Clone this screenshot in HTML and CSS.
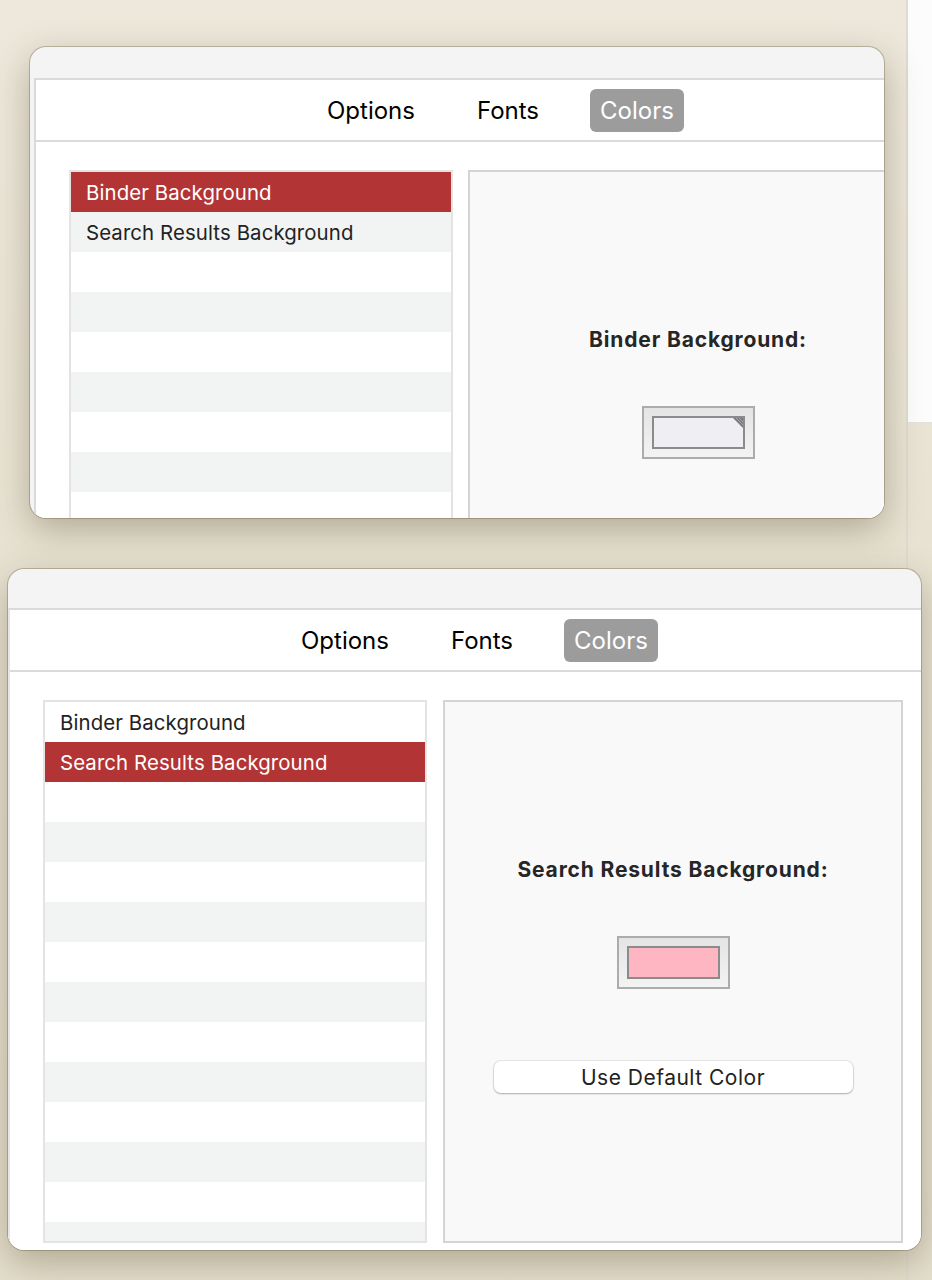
FILE: index.html
```html
<!DOCTYPE html>
<html lang="en">
<head>
<meta charset="utf-8">
<title>Colors preferences</title>
<link rel="stylesheet" href="styles.css">
</head>
<body>
<div class="desktop">
  <div class="backwin"><div class="backwin-top"></div></div>

  <section class="window window-a">
    <div class="titlebar titlebar-a"></div>
    <div class="pane pane-a">
      <nav class="tabs">
        <span class="tab">Options</span>
        <span class="tab">Fonts</span>
        <span class="tab tab-active">Colors</span>
      </nav>
      <div class="body">
        <ul class="list">
          <li class="row selected">Binder Background</li>
          <li class="row">Search Results Background</li>
          <li class="row"></li>
          <li class="row"></li>
          <li class="row"></li>
          <li class="row"></li>
          <li class="row"></li>
          <li class="row"></li>
          <li class="row"></li>
        </ul>
        <div class="panel">
          <h2 class="label">Binder Background:</h2>
          <div class="well">
            <div class="swatch swatch-default">
              <svg class="corner" width="10" height="10" viewBox="0 0 10 10"><polygon points="0,0 10,0 10,10" fill="#7a7a7a"/><line x1="3" y1="0" x2="10" y2="7" stroke="#b5b5b5" stroke-width="0.8"/><line x1="6" y1="0" x2="10" y2="4" stroke="#b5b5b5" stroke-width="0.8"/></svg>
            </div>
          </div>
        </div>
      </div>
    </div>
  </section>

  <section class="window window-b">
    <div class="titlebar titlebar-b"></div>
    <div class="pane pane-b">
      <nav class="tabs">
        <span class="tab">Options</span>
        <span class="tab">Fonts</span>
        <span class="tab tab-active">Colors</span>
      </nav>
      <div class="body body-b">
        <ul class="list list-b">
          <li class="row">Binder Background</li>
          <li class="row selected">Search Results Background</li>
          <li class="row"></li>
          <li class="row"></li>
          <li class="row"></li>
          <li class="row"></li>
          <li class="row"></li>
          <li class="row"></li>
          <li class="row"></li>
          <li class="row"></li>
          <li class="row"></li>
          <li class="row"></li>
          <li class="row"></li>
          <li class="row"></li>
        </ul>
        <div class="panel panel-b">
          <h2 class="label">Search Results Background:</h2>
          <div class="well">
            <div class="swatch swatch-pink"></div>
          </div>
          <button class="default-btn" type="button">Use Default Color</button>
        </div>
      </div>
    </div>
  </section>
</div>
</body>
</html>
```

FILE: styles.css
```css
* { box-sizing: border-box; }

html, body {
  margin: 0;
  padding: 0;
}

body {
  width: 932px;
  height: 1280px;
  overflow: hidden;
  font-family: Inter, "Noto Sans", "Liberation Sans", sans-serif;
  color: #1f1f1f;
}

.desktop {
  position: relative;
  width: 932px;
  height: 1280px;
  background: linear-gradient(180deg, #ede8db 0%, #e8e2d2 45%, #e5dfcd 100%);
}

/* window partly visible behind, at the right edge */
.backwin {
  position: absolute;
  left: 906px;
  top: 0;
  width: 26px;
  height: 1280px;
  border-left: 2px solid #dedbd2;
}

.backwin-top {
  height: 423px;
  background: #fcfcfc;
  border-bottom: 1px solid #e3e1db;
}

.window {
  position: absolute;
  background: #f4f4f4;
  border-radius: 16px;
  overflow: hidden;
  box-shadow: 0 0 0 1px rgba(80, 70, 40, 0.3), 0 12px 36px rgba(70, 60, 30, 0.34);
  display: flex;
  flex-direction: column;
}

.window-a {
  left: 30px;
  top: 47px;
  width: 854px;
  height: 471px;
}

.window-b {
  left: 8px;
  top: 569px;
  width: 913px;
  height: 681px;
}

.titlebar-a { height: 31px; flex-shrink: 0; }
.titlebar-b { height: 39px; flex-shrink: 0; }

.pane {
  flex: 1;
  background: #ffffff;
  border-top: 2px solid #dadada;
  border-left: 2px solid #dadada;
  min-width: 0;
}

.pane-a { margin-left: 4px; }
.pane-b { margin-left: 0; border-left-color: #e6e6e6; }

.tabs {
  height: 60px;
  border-bottom: 2px solid #dadada;
  display: flex;
  align-items: center;
  gap: 40px;
  padding-left: 280px;
  box-sizing: content-box;
}

.tab {
  height: 43px;
  padding: 0 11px;
  display: flex;
  align-items: center;
  font-size: 24px;
  color: #000;
  border-radius: 6px;
  white-space: nowrap;
}

.tab-active {
  background: #9c9c9c;
  color: #fff;
  padding: 0 10px;
}

.body {
  display: flex;
  gap: 15px;
  padding: 28px 0 0 33px;
}

.body-b { gap: 16px; }

.list {
  list-style: none;
  margin: 0;
  padding: 0;
  width: 384px;
  height: 543px;
  flex-shrink: 0;
  border: 2px solid #e3e3e3;
  border-bottom-width: 0;
  overflow: hidden;
}

.list-b {
  border-bottom-width: 2px;
}

.row {
  height: 40px;
  padding-left: 15px;
  display: flex;
  align-items: center;
  font-size: 20.4px;
  letter-spacing: 0.1px;
  color: #222;
  background: #ffffff;
  white-space: nowrap;
}

.row:nth-child(even) { background: #f2f4f3; }

.row.selected {
  background: #b33434;
  color: #fff;
}

.panel {
  width: 460px;
  height: 543px;
  flex-shrink: 0;
  background: #f9f9f9;
  border: 2px solid #d4d4d4;
  display: flex;
  flex-direction: column;
  align-items: center;
  padding-top: 156px;
}

.label {
  margin: 0;
  font-size: 21px;
  line-height: 24px;
  letter-spacing: 0.85px;
  font-weight: 700;
  color: #262626;
}

.well {
  margin-top: 54px;
  width: 113px;
  height: 53px;
  border: 2px solid #acacac;
  background: linear-gradient(180deg, #e4e4e4 0%, #f3f3f3 100%);
  padding: 8px;
}

.swatch {
  position: relative;
  width: 93px;
  height: 33px;
  border: 2px solid #8b8b8b;
}

.swatch-default { background: #efeff3; }
.swatch-pink { background: #ffb6c3; }

.corner {
  position: absolute;
  top: 0;
  right: 0;
  display: block;
}

.default-btn {
  margin-top: 72px;
  width: 359px;
  height: 32px;
  border: none;
  border-radius: 7px;
  background: #ffffff;
  font-family: Inter, "Noto Sans", "Liberation Sans", sans-serif;
  font-size: 21px;
  letter-spacing: 0.5px;
  color: #222;
  padding: 0;
  box-shadow: 0 0 0 1px rgba(0, 0, 0, 0.07), 0 1px 2px rgba(0, 0, 0, 0.25);
}
```
